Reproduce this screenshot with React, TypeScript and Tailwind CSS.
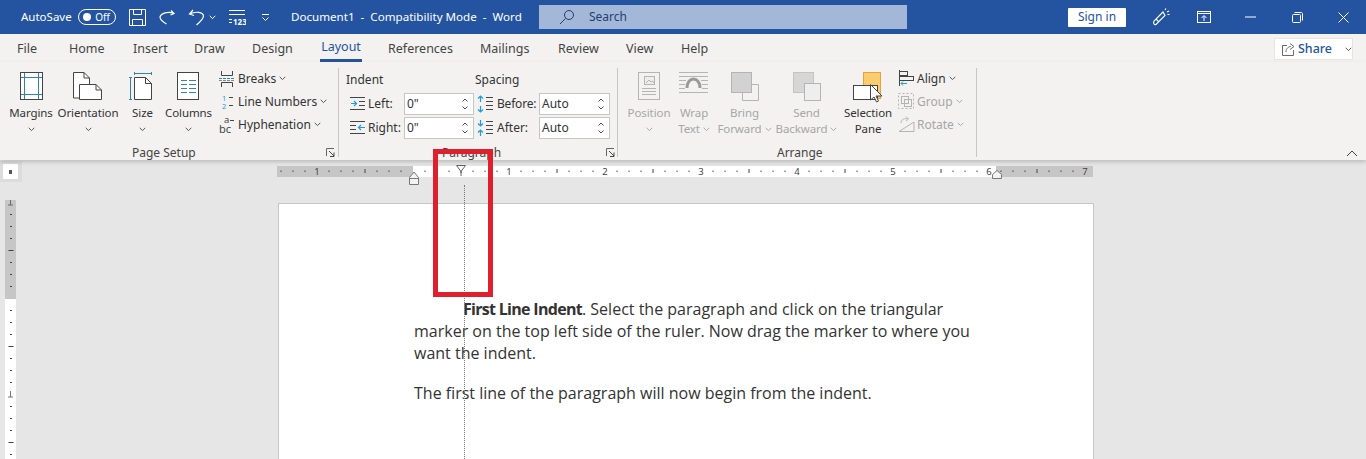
import React from "react";

const Chev = ({ c = "#555", className = "" }: { c?: string; className?: string }) => (
  <svg width="7" height="5" viewBox="0 0 7 5" className={className}>
    <path d="M0.7 0.8 L3.5 3.6 L6.3 0.8" fill="none" stroke={c} strokeWidth="1" />
  </svg>
);

const T = "#2f86a6";
const D = "#444";
const G = "#b4b4b4";
const B = "#1f9bde";

const Margins = () => (
  <svg width="24" height="28" viewBox="0 0 24 28" className="ml-[1px]">
    <rect x="0.5" y="0.5" width="22" height="27" fill="#fff" stroke={D} />
    <path d="M4.5 1V27M18.5 1V27M1 5.5H22M1 22.5H22" stroke={T} strokeWidth="1" />
  </svg>
);
const Orientation = () => (
  <svg width="30" height="29" viewBox="0 0 30 29">
    <path d="M0.5 0.5H11L16.5 6V26H0.5Z" fill="#fff" stroke={D} />
    <path d="M11 0.5V6H16.5" fill="none" stroke={D} />
    <path d="M6.5 12.5H23L28.5 18V27.5H6.5Z" fill="#fff" stroke={D} />
    <path d="M23 12.5V18H28.5" fill="none" stroke={D} />
  </svg>
);
const SizeIcon = () => (
  <svg width="24" height="29" viewBox="0 0 24 29" className="-ml-[3px]">
    <path d="M5.5 1.5H22.5M5.5 0V3M22.5 0V3" stroke={T} fill="none" />
    <path d="M1.5 5.5V28M0 5.5H3M0 27.5H3" stroke={T} fill="none" />
    <path d="M5.5 5.5H16.5L22.5 11.5V27.5H5.5Z" fill="#fff" stroke={D} />
    <path d="M16.5 5.5V11.5H22.5" fill="none" stroke={D} />
  </svg>
);
const Columns = () => (
  <svg width="23" height="28" viewBox="0 0 23 28">
    <rect x="0.5" y="0.5" width="21" height="27" fill="#fff" stroke={D} />
    <path d="M4 8.5H10M12 8.5H19M4 12.5H10M12 12.5H19M4 16.5H10M12 16.5H19M4 20.5H10M12 20.5H19" stroke={T} />
  </svg>
);
const Breaks = () => (
  <svg width="16" height="16" viewBox="0 0 16 16">
    <path d="M2.5 0V4.5H13.5V0" fill="none" stroke={D} />
    <path d="M0 7.5H16" stroke={T} strokeDasharray="3 1" />
    <path d="M0 9.5H16" stroke="#888" strokeDasharray="3 1" />
    <path d="M2.5 16V11.5H13.5V16" fill="none" stroke={D} />
  </svg>
);
const LineNums = () => (
  <svg width="16" height="16" viewBox="0 0 16 16" className="overflow-visible">
    <text x="3" y="7" fontSize="7.5" fontFamily="Noto Sans" fill={B}>1</text>
    <text x="3" y="15" fontSize="7.5" fontFamily="Noto Sans" fill={B}>2</text>
    <path d="M10 3.5H14M10 11.5H14" stroke={D} />
  </svg>
);
const Hyphen = () => (
  <svg width="17" height="18" viewBox="0 0 17 18" className="overflow-visible">
    <text x="5" y="7" fontSize="9.5" fontFamily="Noto Sans" fill="#444">a</text>
    <path d="M11 4.5H15" stroke={D} />
    <text x="0" y="17" fontSize="11" fontFamily="Noto Sans" fill="#444">bc</text>
  </svg>
);
const IndentL = () => (
  <svg width="16" height="16" viewBox="0 0 16 16">
    <path d="M0 1.5H15M9 5.5H15M9 9.5H15M0 13.5H15" stroke={D} />
    <path d="M1 7.5H6M4 5L6.5 7.5L4 10" stroke={B} strokeWidth="1.2" fill="none" />
  </svg>
);
const IndentR = () => (
  <svg width="16" height="16" viewBox="0 0 16 16">
    <path d="M0 1.5H15M0 5.5H6M0 9.5H6M0 13.5H15" stroke={D} />
    <path d="M15 7.5H9M11 5L8.5 7.5L11 10" stroke={B} strokeWidth="1.2" fill="none" />
  </svg>
);
const SpaceB = () => (
  <svg width="17" height="18" viewBox="0 0 17 18">
    <path d="M3.5 1V7M1 3.5L3.5 1L6 3.5M3.5 11V17M1 14.5L3.5 17L6 14.5" stroke={B} strokeWidth="1.2" fill="none" />
    <path d="M9 2.5H16M9 6.5H16M9 10.5H16M9 14.5H16" stroke={D} />
  </svg>
);
const SpaceA = () => (
  <svg width="17" height="18" viewBox="0 0 17 18">
    <path d="M3.5 1V7M1 4.5L3.5 7L6 4.5M3.5 11V17M1 13.5L3.5 11L6 13.5" stroke={B} strokeWidth="1.2" fill="none" />
    <path d="M9 2.5H16M9 6.5H16M9 10.5H16M9 14.5H16" stroke={D} />
  </svg>
);
const PositionI = () => (
  <svg width="23" height="28" viewBox="0 0 23 28">
    <rect x="0.5" y="0.5" width="21" height="27" fill="#f3f2f1" stroke={G} />
    <rect x="6.5" y="4.5" width="10" height="8" fill="#eee" stroke={G} />
    <path d="M8 11L11 8L13 10L14.5 9L16 11" stroke={G} fill="none" />
    <path d="M4 16.5H18M4 19.5H18M4 22.5H18" stroke={G} />
  </svg>
);
const WrapI = () => (
  <svg width="30" height="24" viewBox="0 0 30 24">
    <path d="M0 0.5H29M0 4.5H29M0 8.5H7M22 8.5H29M0 12.5H6M23 12.5H29M0 16.5H6M23 16.5H29M0 20.5H29" stroke={G} />
    <path d="M8 16C8 4 21 4 21 16" fill="none" stroke="#9a9a9a" strokeWidth="3" />
  </svg>
);
const BringI = () => (
  <svg width="28" height="29" viewBox="0 0 28 29">
    <path d="M11.5 12.5H27.5V28.5H11.5Z" fill="#f3f2f1" stroke={G} />
    <rect x="0.5" y="0.5" width="20" height="20" fill="#d2d2d2" stroke={G} />
  </svg>
);
const SendI = () => (
  <svg width="28" height="29" viewBox="0 0 28 29">
    <rect x="0.5" y="0.5" width="20" height="20" fill="#d6d6d6" stroke="#c4c4c4" />
    <rect x="11.5" y="11.5" width="16" height="17" fill="#eeeeee" stroke={G} />
  </svg>
);
const SelPane = () => (
  <svg width="31" height="31" viewBox="0 0 31 31">
    <rect x="10.5" y="0.5" width="17" height="26" fill="#fbcc70" stroke="#e5a33c" />
    <rect x="0.5" y="13.5" width="24" height="14" fill="#fff" stroke={D} />
    <path d="M17.5 12.5V28L21 25L23.5 30L25.5 29L23 24H29Z" fill="#fff" stroke={D} />
  </svg>
);
const AlignI = () => (
  <svg width="17" height="17" viewBox="0 0 17 17">
    <path d="M1.5 0V16" stroke={D} />
    <rect x="1.5" y="1.5" width="8" height="4" fill="none" stroke={D} />
    <rect x="1.5" y="6.5" width="14" height="4" fill="none" stroke={D} />
    <path d="M9 13.5H3M5 11.5L3 13.5L5 15.5" stroke={B} fill="none" />
  </svg>
);
const GroupI = () => (
  <svg width="17" height="17" viewBox="0 0 17 17">
    <rect x="0.5" y="0.5" width="15" height="15" fill="none" stroke={G} strokeDasharray="2 2" />
    <rect x="3.5" y="3.5" width="7" height="7" fill="none" stroke={G} />
    <rect x="6.5" y="6.5" width="7" height="7" fill="none" stroke={G} />
  </svg>
);
const RotateI = () => (
  <svg width="17" height="17" viewBox="0 0 17 17">
    <path d="M1 15.5H16V6Z" fill="none" stroke={G} />
    <path d="M3 7C3 3 7 2 10 3M8 0.5L10.5 3L8 5" fill="none" stroke={G} />
  </svg>
);
const Launcher = () => (
  <svg width="9" height="9" viewBox="0 0 9 9">
    <path d="M0.5 8V0.5H8" fill="none" stroke="#666" />
    <path d="M3 3L8 8M8 4.5V8.5H4" fill="none" stroke="#444" />
  </svg>
);

const Big = ({ w, icon, l1, l2, dis, iconH = "h-[31px]" }: { w: string; icon: React.ReactNode; l1: string; l2?: string; dis?: boolean; iconH?: string }) => (
  <div className={`${w} flex flex-col items-center text-[11.5px] tracking-[-0.1px] ${dis ? "text-[#a6a6a6]" : "text-[#333]"}`}>
    <div className={`${iconH} flex justify-center items-start`}>{icon}</div>
    <div className="h-[16px] leading-[16px] mt-[2px] whitespace-nowrap">{l1}</div>
    <div className="h-[16px] flex items-center justify-center gap-[3px] whitespace-nowrap">
      {l2 && <span>{l2}</span>}
      <Chev c={dis ? "#aaa" : "#555"} />
    </div>
  </div>
);

const Small = ({ icon, label, w, dis }: { icon: React.ReactNode; label: string; w: string; dis?: boolean }) => (
  <div className={`h-[23px] flex items-center ${dis ? "text-[#a6a6a6]" : "text-[#333]"}`}>
    <div className={`${w} flex items-center`}>{icon}</div>
    <span>{label}</span>
    <Chev className="ml-[3px]" c={dis ? "#aaa" : "#555"} />
  </div>
);

const Spin = ({ v, w }: { v: string; w: string }) => (
  <div className={`${w} h-[22px] bg-white border border-[#c8c6c4] flex items-center justify-between pl-[2px] pr-[5px] text-[#333]`}>
    <span>{v}</span>
    <div className="flex flex-col gap-[4px]">
      <svg width="6" height="4" viewBox="0 0 6 4"><path d="M0.5 3.5L3 1L5.5 3.5" fill="none" stroke="#555" /></svg>
      <svg width="6" height="4" viewBox="0 0 6 4"><path d="M0.5 0.5L3 3L5.5 0.5" fill="none" stroke="#555" /></svg>
    </div>
  </div>
);

const Sep = ({ className = "" }: { className?: string }) => <div className={`w-px h-[89px] mt-[6px] bg-[#c8c6c4] ${className}`} />;

const HRuler = () => {
  const ticks: React.ReactNode[] = [];
  const x0 = 136;
  for (let i = -11; i <= 67; i++) {
    const x = x0 + i * 12;
    if (i === 0 || x >= 814) continue;
    if (i % 8 === 0) {
      ticks.push(
        <text key={i} x={x} y="12" fontSize="9.5" textAnchor="middle" fontFamily="Noto Sans" fill="#444">
          {Math.abs(i / 8)}
        </text>
      );
    } else if (i % 4 === 0) {
      ticks.push(<rect key={i} x={x - 0.5} y="6" width="1" height="4" fill="#444" />);
    } else {
      ticks.push(<rect key={i} x={x - 0.5} y="7.5" width="1" height="1.5" fill="#444" />);
    }
  }
  return (
    <svg width="820" height="27" viewBox="0 0 820 27" className="block overflow-visible">
      <rect x="0" y="3" width="816" height="11" fill="#fff" />
      <rect x="0" y="3" width="136" height="11" fill="#c6c6c6" />
      <rect x="719" y="3" width="97" height="11" fill="#c6c6c6" />
      {ticks}
      <path d="M132.5 14.5L137 9L141.5 14.5V21.5H132.5Z" fill="#f3f3f3" stroke="#777" />
      <path d="M132.5 15.5H141.5" stroke="#777" />
      <path d="M179.5 2.5H188.5L184 8.5Z" fill="#fff" stroke="#666" />
      <path d="M184 8.5V13" stroke="#666" />
      <path d="M715.5 15.5V11.5L720 7.5L724.5 11.5V15.5Z" fill="#f3f3f3" stroke="#777" />
    </svg>
  );
};

const VRuler = () => {
  const ticks: React.ReactNode[] = [];
  for (let i = -8; i <= 20; i++) {
    const y = 99 + i * 12 - 1;
    if (i === 0) continue;
    if (i % 8 === 0) {
      ticks.push(<path key={i} d={`M5.5 ${y - 3}V${y + 3}M3 ${y + 3}H8`} stroke="#555" fill="none" strokeWidth="0.8" />);
    } else if (i % 4 === 0) {
      ticks.push(<rect key={i} x="3.5" y={y} width="5" height="1" fill="#444" />);
    } else {
      ticks.push(<rect key={i} x="5" y={y} width="2" height="1" fill="#444" />);
    }
  }
  return (
    <svg width="11" height="259" viewBox="0 0 11 259" className="block">
      <rect x="0" y="0" width="11" height="259" fill="#fff" />
      <rect x="0" y="0" width="11" height="99" fill="#c6c6c6" />
      {ticks}
    </svg>
  );
};

export default function App() {
  return (
    <div className="relative w-[1366px] h-[459px] overflow-hidden bg-[#e6e6e6] font-['Noto_Sans','Open_Sans',sans-serif] text-[12px]">
      {/* Title bar */}
      <div className="h-[34px] bg-[#24549f] flex items-center text-white">
        <span className="ml-[21px] w-[57px] text-[11.5px]">AutoSave</span>
        <div className="w-[38px] h-[16px] rounded-full border border-white flex items-center justify-between pl-[4px] pr-[5px]">
          <span className="w-[8px] h-[8px] rounded-full bg-white" />
          <span className="text-[10px] leading-none">Off</span>
        </div>
        <svg className="ml-[13px]" width="17" height="17" viewBox="0 0 17 17" fill="none" stroke="#fff">
          <path d="M0.5 0.5H16.5V16.5H0.5Z" />
          <path d="M4.5 0.5V5.5H12.5V0.5M3.5 16.5V10.5H13.5V16.5" />
        </svg>
        <svg className="ml-[13px]" width="17" height="16" viewBox="0 0 17 16" fill="none" stroke="#fff" strokeWidth="1.2">
          <path d="M12 1.5L15 4.5L11.5 6M15 4.5C9 2 2 4 1 8C1 10 4 13 7.5 15" />
        </svg>
        <svg className="ml-[12px]" width="17" height="17" viewBox="0 0 17 17" fill="none" stroke="#fff" strokeWidth="1.2">
          <path d="M5 1L1.5 5L6 6.5M1.5 5C8 2 15 3 15.5 7C15.5 10 12 13 8.5 16" />
        </svg>
        <Chev c="#fff" className="ml-[4px]" />
        <svg className="ml-[12px]" width="18" height="18" viewBox="0 0 18 18">
          <path d="M1 2.5H17M1 6.5H17M1 11.5H4M1 14.5H4" stroke="#fff" fill="none" />
          <text x="5" y="17" fontSize="8" fontWeight="700" fontFamily="Noto Sans" fill="#fff">123</text>
        </svg>
        <svg className="ml-[15px]" width="9" height="9" viewBox="0 0 9 9">
          <path d="M1 1.5H8M1.5 4.5L4.5 7.5L7.5 4.5" stroke="#fff" fill="none" />
        </svg>
        <span className="ml-[21px] w-[248px] whitespace-pre text-[11.6px]">Document1  -  Compatibility Mode  -  Word</span>
        <div className="w-[368px] h-[24px] bg-[#a3b8d8] flex items-center text-[#1f3f70]">
          <svg className="ml-[20px]" width="16" height="16" viewBox="0 0 16 16" fill="none" stroke="#1f3f70">
            <circle cx="10" cy="6" r="4.5" />
            <path d="M6.5 9.5L1 15" />
          </svg>
          <span className="ml-[14px]">Search</span>
        </div>
        <div className="ml-[161px] w-[58px] h-[19px] bg-white rounded-[1px] text-[#24549f] flex items-center justify-center">Sign in</div>
        <svg className="ml-[26px]" width="18" height="18" viewBox="0 0 18 18" fill="none" stroke="#fff" strokeWidth="1.1">
          <path d="M11 4L2 13C1 15 2 17 4 16.5L13 7.5L11 4Z" />
          <path d="M4 11L7 14M13 2L14 0.5M15 4L17 3M15.5 6.5H17.5" />
        </svg>
        <svg className="ml-[27px]" width="14" height="12" viewBox="0 0 14 12" fill="none" stroke="#fff">
          <rect x="0.5" y="0.5" width="13" height="11" />
          <path d="M0.5 2.5H13.5M7 10V5M4.5 7L7 4.5L9.5 7" />
        </svg>
        <svg className="ml-[34px]" width="11" height="2" viewBox="0 0 11 2"><path d="M0 1H11" stroke="#fff" /></svg>
        <svg className="ml-[36px]" width="11" height="11" viewBox="0 0 11 11" fill="none" stroke="#fff">
          <rect x="0.5" y="2.5" width="8" height="8" rx="1" />
          <path d="M2.5 0.5H9C10 0.5 10.5 1 10.5 2V8.5" />
        </svg>
        <svg className="ml-[35px]" width="11" height="11" viewBox="0 0 11 11"><path d="M0.5 0.5L10.5 10.5M10.5 0.5L0.5 10.5" stroke="#fff" /></svg>
      </div>

      {/* Tabs */}
      <div className="h-[28px] bg-[#f3f2f0] flex text-[12.5px] text-[#444] pl-[17px]">
        {[
          ["File", "w-[52px]"],
          ["Home", "w-[64px]"],
          ["Insert", "w-[61px]"],
          ["Draw", "w-[58px]"],
          ["Design", "w-[68px]"],
        ].map(([t, w]) => (
          <div key={t} className={`${w} h-full flex items-center pt-[3px]`}>{t}</div>
        ))}
        <div className="w-[68px] h-full">
          <div className="w-[42px] h-full flex items-center justify-center pt-[2px] text-[#24549f] border-b-[3px] border-[#24549f]">Layout</div>
        </div>
        {[
          ["References", "w-[92px]"],
          ["Mailings", "w-[78px]"],
          ["Review", "w-[68px]"],
          ["View", "w-[55px]"],
          ["Help", "w-[50px]"],
        ].map(([t, w]) => (
          <div key={t} className={`${w} h-full flex items-center pt-[3px]`}>{t}</div>
        ))}
        <div className="ml-auto mr-[13px] mt-[4px] w-[79px] h-[22px] bg-white border border-[#e6e4e1] flex items-center pl-[7px] text-[#24549f] font-medium text-[12.5px]">
          <svg width="13" height="13" viewBox="0 0 13 13" fill="none" stroke="#666">
            <path d="M5 2.5H0.5V12.5H11.5V7" />
            <path d="M4 9C4 5 7 3.5 9 3.5M8 0.5L12 3.5L8 6.5" />
          </svg>
          <span className="ml-[3px]">Share</span>
          <Chev c="#555" className="ml-[13px]" />
        </div>
      </div>

      {/* Ribbon */}
      <div className="relative h-[98px] bg-[#f3f2f0] flex shadow-[0_2px_4px_rgba(0,0,0,0.18)]">
        {/* Page Setup */}
        <div className="w-[338px] flex flex-col">
          <div className="h-[82px] flex pl-[6px] pt-[10px]">
            <Big w="w-[50px]" icon={<Margins />} l1="Margins" />
            <Big w="w-[64px]" icon={<Orientation />} l1="Orientation" />
            <Big w="w-[45px]" icon={<SizeIcon />} l1="Size" />
            <Big w="w-[47px]" icon={<Columns />} l1="Columns" />
            <div className="ml-[7px] -mt-[5px]">
              <Small w="w-[19px]" icon={<Breaks />} label="Breaks" />
              <Small w="w-[19px]" icon={<LineNums />} label="Line Numbers" />
              <Small w="w-[19px]" icon={<Hyphen />} label="Hyphenation" />
            </div>
          </div>
          <div className="h-[16px] pt-[1px] flex items-center text-[#444]">
            <span className="ml-[132px] w-[194px]">Page Setup</span>
            <Launcher />
          </div>
        </div>
        <Sep />
        {/* Paragraph */}
        <div className="w-[278px] flex flex-col">
          <div className="h-[82px] flex pt-[10px]">
            <div className="w-[136px] pl-[7px] text-[#333]">
              <div className="h-[16px] leading-[16px]">Indent</div>
              <div className="mt-[5px] flex flex-col gap-[2px]">
                <div className="flex items-center">
                  <div className="ml-[4px] w-[18px]"><IndentL /></div>
                  <div className="w-[36px]">Left:</div>
                  <Spin v={'0"'} w="w-[70px]" />
                </div>
                <div className="flex items-center">
                  <div className="ml-[4px] w-[18px]"><IndentR /></div>
                  <div className="w-[36px]">Right:</div>
                  <Spin v={'0"'} w="w-[70px]" />
                </div>
              </div>
            </div>
            <div className="text-[#333]">
              <div className="h-[16px] leading-[16px]">Spacing</div>
              <div className="mt-[5px] flex flex-col gap-[2px]">
                <div className="flex items-center">
                  <div className="ml-[2px] w-[20px]"><SpaceB /></div>
                  <div className="w-[42px] tracking-[-0.2px]">Before:</div>
                  <Spin v="Auto" w="w-[71px]" />
                </div>
                <div className="flex items-center">
                  <div className="ml-[2px] w-[20px]"><SpaceA /></div>
                  <div className="w-[42px]">After:</div>
                  <Spin v="Auto" w="w-[71px]" />
                </div>
              </div>
            </div>
          </div>
          <div className="h-[16px] pt-[1px] flex items-center text-[#444]">
            <span className="ml-[103px] w-[164px]">Paragraph</span>
            <Launcher />
          </div>
        </div>
        <Sep />
        {/* Arrange */}
        <div className="w-[358px] flex flex-col">
          <div className="h-[82px] flex pl-[8px] pt-[10px]">
            <Big dis w="w-[46px]" icon={<PositionI />} l1="Position" />
            <Big dis w="w-[44px]" icon={<WrapI />} l1="Wrap" l2="Text" />
            <Big dis w="w-[57px]" icon={<BringI />} l1="Bring" l2="Forward" />
            <Big dis w="w-[67px]" icon={<SendI />} l1="Send" l2="Backward" />
            <div className="w-[56px] flex flex-col items-center text-[#333] text-[11.5px] tracking-[-0.1px]">
              <div className="h-[31px]"><SelPane /></div>
              <div className="h-[16px] leading-[16px] mt-[2px] whitespace-nowrap">Selection</div>
              <div className="h-[16px] leading-[16px]">Pane</div>
            </div>
            <div className="ml-[2px] -mt-[5px]">
              <Small w="w-[19px]" icon={<AlignI />} label="Align" />
              <Small dis w="w-[19px]" icon={<GroupI />} label="Group" />
              <Small dis w="w-[19px]" icon={<RotateI />} label="Rotate" />
            </div>
          </div>
          <div className="h-[16px] pt-[1px] flex items-center text-[#444]">
            <span className="ml-[159px]">Arrange</span>
          </div>
        </div>
        <Sep />
        <div className="ml-auto mr-[8px] self-end mb-[3px]">
          <svg width="12" height="7" viewBox="0 0 12 7"><path d="M1 6L6 1L11 6" fill="none" stroke="#444" /></svg>
        </div>
      </div>

      {/* Ruler row */}
      <div className="h-[43px] flex items-start">
        <div className="mt-[1px] w-[22px] h-[21px] bg-[#dcdcdc] flex items-center">
          <div className="ml-[3px] w-[15px] h-[15px] bg-white flex items-center justify-center">
            <div className="w-[3px] h-[4px] bg-[#555]" />
          </div>
        </div>
        <div className="ml-[255px] mt-[3px]">
          <HRuler />
        </div>
      </div>

      {/* Document row */}
      <div className="flex -mt-[3px]">
        <div className="ml-[5px] w-[11px]">
          <VRuler />
        </div>
        <div className="ml-[262px] mt-[3px] w-[816px] h-[300px] bg-white border border-[#c6c6c6] pl-[135px] pt-[94px] font-['Open_Sans',sans-serif] text-[#333] text-[16px] leading-[22px] whitespace-nowrap">
          <p className="indent-[49px]">
            <b className="font-bold tracking-[-0.7px]">First Line Indent</b>. Select the paragraph and click on the triangular
            <br />
            marker on the top left side of the ruler. Now drag the marker to where you
            <br />
            want the indent.
          </p>
          <p className="mt-[18px]">The first line of the paragraph will now begin from the indent.</p>
        </div>
      </div>

      {/* Overlays */}
      <div className="absolute left-[464px] top-[185px] bottom-0 border-l border-dotted border-[#777]" />
      <div className="absolute left-[433px] top-[149px] w-[60px] h-[148px] border-[5px] border-[#df1f2d]" />
    </div>
  );
}
